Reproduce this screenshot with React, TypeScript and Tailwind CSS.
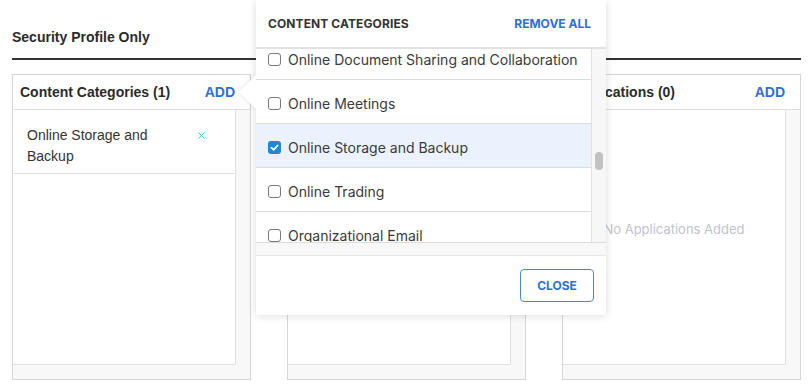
import React from 'react';

type Row = { label: string; checked?: boolean };

const rows: Row[] = [
  { label: 'Online Document Sharing and Collaboration' },
  { label: 'Online Meetings' },
  { label: 'Online Storage and Backup', checked: true },
  { label: 'Online Trading' },
  { label: 'Organizational Email' },
];

const Checkbox: React.FC<{ checked?: boolean }> = ({ checked }) =>
  checked ? (
    <span className="flex h-[13px] w-[13px] shrink-0 items-center justify-center rounded-[3px] bg-[#1b89d8]">
      <svg width="9" height="9" viewBox="0 0 10 10" fill="none">
        <path d="M1.5 5.2L4 7.6L8.6 2.6" stroke="white" strokeWidth={1.8} strokeLinecap="round" strokeLinejoin="round" />
      </svg>
    </span>
  ) : (
    <span className="h-[13px] w-[13px] shrink-0 rounded-[3px] border border-[#7a7a7a] bg-white" />
  );

const Panel: React.FC<{ title?: string; children?: React.ReactNode }> = ({ title, children }) => (
  <div className="flex h-[306px] flex-col border border-[#d6d6d6] bg-[#f8f8f8]">
    <div className="flex h-[35px] shrink-0 items-center justify-between border-b border-[#dedede] bg-white pl-[7px] pr-[15px]">
      {title && (
        <>
          <span className="text-[14px] font-bold text-[#2b2b2b]">{title}</span>
          <span className="text-[14px] font-bold text-[#2f6fd6]">ADD</span>
        </>
      )}
    </div>
    <div className="flex flex-1 pb-[14px] pr-[14px]">
      <div className="flex-1 border-b border-r border-[#e0e0e0] bg-white">{children}</div>
    </div>
  </div>
);

export default function App() {
  return (
    <div className="relative h-[392px] w-[812px] overflow-hidden bg-white font-['Liberation_Sans',Arial,sans-serif]">
      <div className="pl-[12px] pr-[11px] pt-[28px]">
        <h2 className="text-[14px] font-bold leading-[18px] text-[#2b2b2b]">Security Profile Only</h2>
        <div className="mt-[12px] h-[2px] bg-[#333]" />

        <div className="mt-[14px] grid grid-cols-3 gap-[36px]">
          <Panel title="Content Categories (1)">
            <div className="flex items-start border-b border-[#e0e0e0] pb-[6px] pl-[14px] pr-[30px] pt-[15px]">
              <span className="flex-1 text-[14px] leading-[21px] text-[#333]">Online Storage and Backup</span>
              <svg className="ml-2 mt-[7px]" width="7" height="7" viewBox="0 0 7 7">
                <path d="M0.5 0.5L6.5 6.5M6.5 0.5L0.5 6.5" stroke="#45c7b1" strokeWidth={1} />
              </svg>
            </div>
          </Panel>
          <Panel />
          <Panel title="Applications (0)">
            <div className="pt-[110px] text-center font-['Inter',sans-serif] text-[13px] text-[#c0c4cb]">
              No Applications Added
            </div>
          </Panel>
        </div>
      </div>

      {/* popover */}
      <div className="absolute left-[256px] top-0 z-20 flex h-[315px] w-[350px] flex-col bg-white font-['Inter',sans-serif] shadow-[0_1px_8px_rgba(0,0,0,0.14)]">
        <div className="absolute left-[-12px] top-[80px] -z-10 h-[24px] w-[24px] rotate-45 bg-white shadow-[0_0_6px_rgba(0,0,0,0.12)]" />
        <div className="flex h-[49px] shrink-0 items-center justify-between border-b-2 border-[#e2e2e2] bg-white pl-[12px] pr-[15px] pt-[1px]">
          <span className="text-[12px] font-bold tracking-[0.1px] text-[#333]">CONTENT CATEGORIES</span>
          <span className="text-[12px] font-bold text-[#2f6fd6]">REMOVE ALL</span>
        </div>
        <div className="flex h-[207px] shrink-0 flex-col border-b border-[#e8e8e8] bg-[#f8f8f8]">
          <div className="flex h-[194px] border-b border-[#dcdcdc]">
            <div className="flex-1 overflow-hidden border-r border-[#e2e2e2] bg-white">
              <div className="-mt-[13px]">
                {rows.map((r) => (
                  <div
                    key={r.label}
                    className={`flex h-[44px] items-center gap-[7px] border-b border-[#dcdcdc] pl-[12px] pt-[3px] text-[14px] text-[#3a3a3a] ${r.checked ? 'bg-[#ebf2fe]' : 'bg-white'}`}
                  >
                    <Checkbox checked={r.checked} />
                    <span>{r.label}</span>
                  </div>
                ))}
              </div>
            </div>
            <div className="w-[14px] bg-[#f7f7f7] pt-[103px]">
              <div className="ml-[3px] h-[18px] w-[8px] rounded-full bg-[#c2c2c2]" />
            </div>
          </div>
        </div>
        <div className="flex flex-1 items-start justify-end pr-[12px] pt-[13px]">
          <button className="h-[33px] w-[74px] rounded-[4px] border border-[#4d82de] bg-white text-[12px] font-bold text-[#2f6fd6]">
            CLOSE
          </button>
        </div>
      </div>
    </div>
  );
}
